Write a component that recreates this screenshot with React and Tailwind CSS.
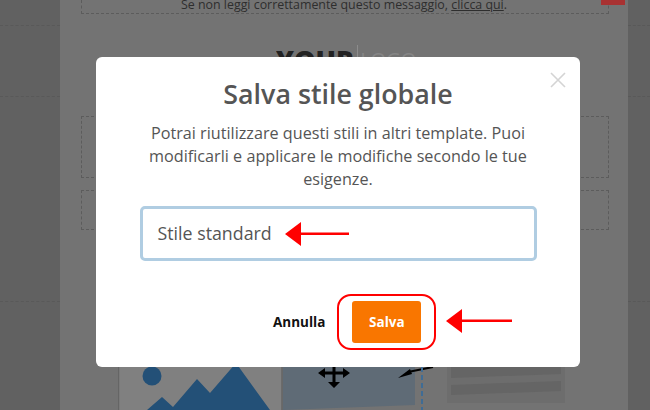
import React from 'react';

const font = "font-['Open_Sans','Noto_Sans',sans-serif]";

const RedArrow = ({ className, width = 66 }) => (
  <svg className={className} width={width} height="24" viewBox={`0 0 ${width} 24`}>
    <path d={`M0 12 L16 0 L16 10.5 L${width} 10.5 L${width} 13 L16 13 L16 24 Z`} fill="#ff0000" />
  </svg>
);

const CloseIcon = () => (
  <svg width="18" height="18" viewBox="0 0 18 18" stroke="#d4d4d4" strokeWidth="1.6" fill="none">
    <path d="M2 2 L16 16 M16 2 L2 16" />
  </svg>
);

// illustrazione in basso, coordinate dal bordo sinistro della prima cella
const Artwork = () => (
  <svg width="450" height="43" viewBox="0 0 450 43">
    <rect x="0" y="0" width="164" height="43" fill="#808080" />
    <path d="M0.5 0 L0.5 43" stroke="#656565" strokeWidth="1.5" />
    <path d="M164 0 L164 43" stroke="#656565" strokeWidth="1.5" />
    <path d="M165 0 L297 0 L297 38 L165 43 Z" fill="#5f6b76" />
    <circle cx="34" cy="9" r="9.5" fill="#235077" />
    <path d="M29 43 L44 30 L55 40 L79 12 L92 26 L118 -4 L152 43 Z" fill="#235077" />
    <path d="M203 6 L229 6 M216 0 L216 17" stroke="#000" strokeWidth="3" />
    <path d="M207 1 L200 6 L207 11 Z M225 1 L232 6 L225 11 Z M210 15 L216 21 L222 15 Z" fill="#000" />
    <path d="M280 11 L292 2 L294 7 Z" fill="#000" />
    <path d="M290 5 L315 0" stroke="#000" strokeWidth="2" />
    <path d="M304 0 L304 43" stroke="#3f6c95" strokeWidth="2" strokeDasharray="5 3" />
    <rect x="329" y="0" width="118" height="36" fill="#6d6d6d" />
    <path d="M333 0 L443 0 L443 7 L333 11 Z" fill="#656565" />
    <path d="M333 18 L443 14 L443 24 L333 28 Z" fill="#656565" />
  </svg>
);

const SideLines = () => (
  <div className="flex flex-col">
    <div className="mt-[25px] border-t border-dashed border-[#595959]" />
    <div className="mt-[70px] border-t border-dashed border-[#595959]" />
    <div className="mt-[204px] border-t border-dashed border-[#595959]" />
  </div>
);

export default function App() {
  return (
    <div className={`relative w-[650px] h-[410px] overflow-hidden bg-[#616161] flex ${font}`}>
      <div className="w-[60px]">
        <SideLines />
      </div>

      {/* pagina editor dietro l'overlay */}
      <div className="w-[568px] h-[410px] bg-[#737373] flex flex-col">
        <div className="relative ml-[21px] w-[528px] h-[14px] border-b border-l border-r border-dashed border-[#5c5c5c] text-center text-[12.4px] leading-[10px] text-[#2e2e2e]">
          <span className="-ml-[2px]">Se non leggi correttamente questo messaggio, <span className="underline">clicca qui</span>.</span>
          <div className="absolute left-[519px] top-0 w-[24px] h-[5px] bg-[#a83232]" />
        </div>
        <div className="mt-[31px] ml-[216px] h-[12px] overflow-hidden flex items-start text-[27px] leading-[30px]">
          <span className="font-extrabold text-[#222]">YOUR</span>
          <span className="ml-[3px] pl-[2px] border-l border-[#8c8c8c] text-[20px] text-[#858585]">LOGO</span>
        </div>
        <div className="mt-[59px] ml-[21px] w-[528px] h-[62px] border border-dashed border-[#5c5c5c]" />
        <div className="mt-[12px] ml-[21px] w-[528px] h-[40px] border border-dashed border-[#5c5c5c]" />
        <div className="mt-auto ml-[58px] h-[43px]">
          <Artwork />
        </div>
      </div>

      <div className="w-[22px]">
        <SideLines />
      </div>

      {/* overlay */}
      <div className="absolute left-[96px] top-[57px] w-[484px] h-[310px] bg-white rounded-[6px] flex flex-col items-center">
        <button className="absolute right-[13px] top-[14px]">
          <CloseIcon />
        </button>
        <h2 className="mt-[19px] text-[26.8px] leading-[36px] font-semibold text-[#555]">Salva stile globale</h2>
        <p className="mt-[10px] w-[400px] text-center text-[16.2px] leading-[23px] text-[#555]">
          Potrai riutilizzare questi stili in altri template. Puoi modificarli e applicare le modifiche secondo le tue esigenze.
        </p>
        <div className="relative mt-[15px] w-[397px] h-[55px] rounded-[5px] border-[3px] border-[#b0cde2] flex items-center pl-[15px] text-[17.8px] text-[#555]">
          Stile standard
          <RedArrow className="absolute left-[142px] top-[13px]" width={64} />
        </div>
        <div className="relative mt-[33px] w-full flex items-center">
          <span className="ml-[177px] text-[13.5px] font-bold text-[#111]">Annulla</span>
          <div className="ml-[12px] w-[99px] h-[56px] rounded-[14px] border-2 border-[#f00] flex items-center justify-center">
            <button className="w-[69px] h-[42px] rounded-[3px] bg-[#f97600] text-white text-[13.5px] font-bold">Salva</button>
          </div>
          <RedArrow className="absolute left-[350px] top-[15px]" />
        </div>
      </div>
    </div>
  );
}
